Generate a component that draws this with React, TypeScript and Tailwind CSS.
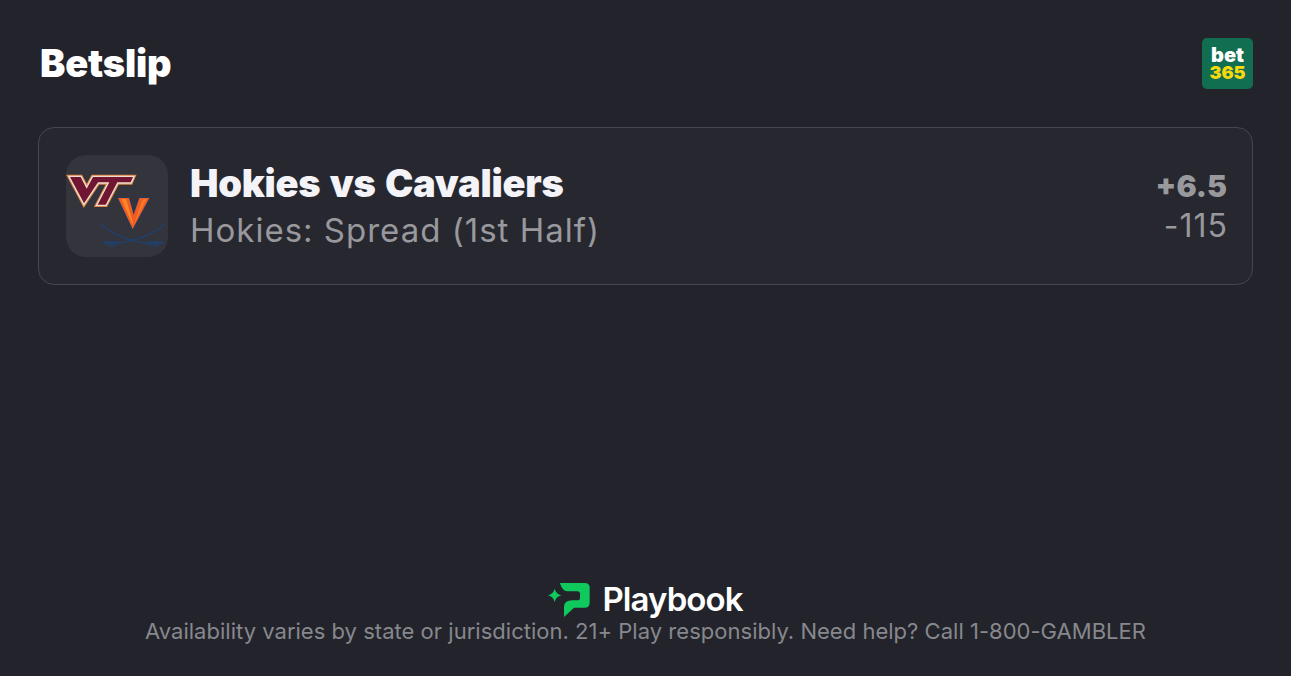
import React from 'react';

const VT_PATH = 'M18 27H50L68 62L87 27H207L200 43H160L125 110H101L136 43H102L60 106Z';

const MatchupLogo = () => (
  <svg viewBox="6 -39 306 306" className="h-full w-full">
    {/* VT */}
    <path d={VT_PATH} fill="none" stroke="#dd8648" strokeWidth="14" strokeLinejoin="miter" />
    <path d={VT_PATH} fill="none" stroke="#f0dccb" strokeWidth="8" strokeLinejoin="miter" />
    <path d={VT_PATH} fill="#701532" />
    {/* sabres */}
    <g fill="none" stroke="#1f4170" strokeLinecap="round">
      <path d="M110 168C140 196 190 216 246 226" strokeWidth="4" />
      <path d="M302 168C272 196 222 216 166 226" strokeWidth="4" />
      <path d="M120 224H166M248 224H294" strokeWidth="7" />
      <path d="M132 226C134 238 152 238 156 226M258 226C262 238 280 238 282 226" strokeWidth="4" />
    </g>
    {/* V */}
    <path
      d="M162 90H195L209 140L226 90H256L206 183Z"
      fill="#ee5c20"
      stroke="#1f3a66"
      strokeWidth="6"
      paintOrder="stroke"
      strokeLinejoin="round"
    />
    <path d="M172 93H186L206 160L207 172Z" fill="#f8872c" />
    <path d="M236 93H248L210 168Z" fill="#f8782a" />
  </svg>
);

const PlaybookMark = () => (
  <svg viewBox="12 10 126 108" className="h-[36px] w-[42px] overflow-visible">
    <path
      d="M48 16C52 30 58 40 70 41H100Q108 41 108 49V60Q108 68 100 68H85Q60 68 60 88V118L90 90H122Q137 90 137 75V30Q137 16 122 16Z"
      fill="#10c95c"
    />
    <path d="M32 33C35 44 41 50 52 53C41 56 35 62 32 73C29 62 23 56 12 53C23 50 29 44 32 33Z" fill="#10c95c" />
  </svg>
);

const App = () => {
  return (
    <div className="flex h-[676px] w-full flex-col overflow-hidden bg-[#22232b] px-[38px] font-['Inter',sans-serif]">
      {/* Header */}
      <div className="flex h-[127px] items-start justify-between pt-[38px]">
        <h1 className="pl-[2px] text-[38px] leading-[50px] font-black tracking-[-0.2px] text-white">Betslip</h1>
        <div className="flex h-[51px] w-[51px] flex-col items-center justify-center rounded-[5px] bg-[#126e51] pt-[1px] font-black">
          <span className="text-[20px] leading-[17px] text-white">bet</span>
          <span className="text-[18px] leading-[17px] text-[#f5d90f]">365</span>
        </div>
      </div>

      {/* Bet card */}
      <div className="flex h-[158px] items-center justify-between rounded-[16px] border border-[#45464e] bg-[#26272f] pr-[25px] pl-[27px]">
        <div className="flex items-center gap-[22px]">
          <div className="h-[102px] w-[102px] overflow-hidden rounded-[20px] bg-[#33343c]">
            <MatchupLogo />
          </div>
          <div className="flex flex-col">
            <span className="text-[38px] leading-[48px] font-black tracking-[-0.25px] [word-spacing:2px] text-[#f4f4f8]">Hokies vs Cavaliers</span>
            <span className="text-[33px] leading-[46px] tracking-[1px] text-[#98989d]">Hokies: Spread (1st Half)</span>
          </div>
        </div>
        <div className="flex flex-col items-end">
          <span className="text-[30px] leading-[39px] font-black text-[#98989d]">+6.5</span>
          <span className="-mr-[1px] text-[32px] leading-[40px] tracking-[1px] text-[#98989d]">-115</span>
        </div>
      </div>

      {/* Footer */}
      <div className="mt-auto flex flex-col items-center pb-[31px]">
        <div className="flex items-center gap-[12px]">
          <PlaybookMark />
          <span className="text-[33px] leading-[36px] font-semibold tracking-[-0.9px] text-white">Playbook</span>
        </div>
        <p className="text-[22px] leading-[28px] tracking-[0.02px] text-[#87888d]">
          Availability varies by state or jurisdiction. 21+ Play responsibly. Need help? Call 1-800-GAMBLER
        </p>
      </div>
    </div>
  );
};

export default App;
